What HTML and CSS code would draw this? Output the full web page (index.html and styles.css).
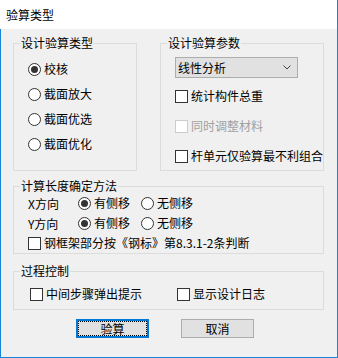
FILE: index.html
```html
<!DOCTYPE html>
<html lang="zh">
<head>
<meta charset="utf-8">
<title>验算类型</title>
<link rel="stylesheet" href="styles.css">
</head>
<body>
<div class="window">
  <div class="titlebar">验算类型</div>
  <div class="client">
    <div class="top-row">
      <fieldset class="group g-type">
        <legend>设计验算类型</legend>
        <div class="body">
          <label class="opt"><span class="radio checked"></span>校核</label>
          <label class="opt"><span class="radio"></span>截面放大</label>
          <label class="opt"><span class="radio"></span>截面优选</label>
          <label class="opt"><span class="radio"></span>截面优化</label>
        </div>
      </fieldset>
      <fieldset class="group g-params">
        <legend>设计验算参数</legend>
        <div class="body">
          <div class="combo"><span>线性分析</span><svg class="chev" width="8" height="5" viewBox="0 0 8 5"><path d="M0.5 0.5 L4 4 L7.5 0.5" fill="none" stroke="#444" stroke-width="1"/></svg></div>
          <label class="opt"><span class="check"></span>统计构件总重</label>
          <label class="opt disabled"><span class="check"></span>同时调整材料</label>
          <label class="opt"><span class="check"></span>杆单元仅验算最不利组合</label>
        </div>
      </fieldset>
    </div>
    <fieldset class="group g-length">
      <legend>计算长度确定方法</legend>
      <div class="body">
        <div class="dir-row">
          <span class="dir-label">X方向</span>
          <label class="opt side"><span class="radio checked"></span>有侧移</label>
          <label class="opt"><span class="radio"></span>无侧移</label>
        </div>
        <div class="dir-row">
          <span class="dir-label">Y方向</span>
          <label class="opt side"><span class="radio checked"></span>有侧移</label>
          <label class="opt"><span class="radio"></span>无侧移</label>
        </div>
        <label class="opt"><span class="check"></span>钢框架部分按《钢标》第8.3.1-2条判断</label>
      </div>
    </fieldset>
    <fieldset class="group g-process">
      <legend>过程控制</legend>
      <div class="body">
        <label class="opt step"><span class="check"></span>中间步骤弹出提示</label>
        <label class="opt"><span class="check"></span>显示设计日志</label>
      </div>
    </fieldset>
    <div class="buttons">
      <button class="btn default">验算</button>
      <button class="btn">取消</button>
    </div>
  </div>
</div>
</body>
</html>
```
FILE: styles.css
```css
* { box-sizing: border-box; }
html, body { margin: 0; padding: 0; background: #ffffff; }
body {
  font-family: "Noto Sans CJK SC", "Noto Sans", sans-serif;
  font-size: 12px;
  color: #000;
}
.window {
  width: 338px;
  height: 358px;
  display: flex;
  flex-direction: column;
}
.titlebar {
  height: 29px;
  line-height: 30px;
  padding-left: 6px;
  background: #fff;
  border-right: 1px solid #1883d7;
}
.client {
  flex: 1;
  background: #f0f0f0;
  border: 1px solid #1883d7;
  border-top: none;
  padding: 6px 13px 0 12px;
  display: flex;
  flex-direction: column;
}
.top-row {
  display: grid;
  grid-template-columns: 124px 164px;
  column-gap: 23px;
  height: 136px;
}
.group {
  margin: 0;
  padding: 0;
  border: 1px solid #dcdcdc;
  min-width: 0;
}
.group legend {
  margin-left: 6px;
  padding: 0 1px;
  line-height: 16px;
  height: 16px;
}
.body {
  display: flex;
  flex-direction: column;
}
.opt {
  display: flex;
  align-items: center;
  height: 16px;
  line-height: 16px;
  white-space: nowrap;
}
.radio, .check {
  flex: none;
  width: 13px;
  height: 13px;
  margin-right: 3px;
  background: #fff;
  border: 1px solid #333;
}
.radio { border-radius: 50%; position: relative; }
.radio.checked::after {
  content: "";
  position: absolute;
  left: 2px; top: 2px;
  width: 7px; height: 7px;
  border-radius: 50%;
  background: #333;
}
.disabled { color: #a0a0a0; }
.disabled .check { border-color: #cccccc; }

.g-type .body { padding: 10px 0 0 14px; gap: 9px; }
.g-params .body { padding: 6px 0 0 14px; }
.combo {
  width: 123px;
  height: 21px;
  background: #e1e1e1;
  border: 1px solid #adadad;
  display: flex;
  align-items: center;
  justify-content: space-between;
  padding: 0 6px 0 2px;
  margin-bottom: 10px;
}
.chev { display: block; }
.g-params .opt + .opt { margin-top: 14px; }

.g-length { margin-top: 7px; }
.g-length .body { padding: 1px 0 2px 14px; gap: 4px; }
.dir-row { display: flex; align-items: center; height: 16px; }
.dir-label { width: 50px; }
.side { width: 63px; }

.g-process { margin-top: 9px; }
.g-process .body { flex-direction: row; padding: 7px 0 7px 16px; }
.step { width: 147px; }

.buttons {
  margin-top: 9px;
  display: flex;
  gap: 32px;
  padding-left: 63px;
}
.btn {
  width: 73px;
  height: 19px;
  padding: 0;
  margin: 0;
  font: inherit;
  color: #000;
  background: #e1e1e1;
  border: 1px solid #adadad;
  line-height: 16px;
}
.btn.default {
  border: 2px solid #0078d7;
  outline: 1px dotted #000;
  outline-offset: -3px;
}
```
